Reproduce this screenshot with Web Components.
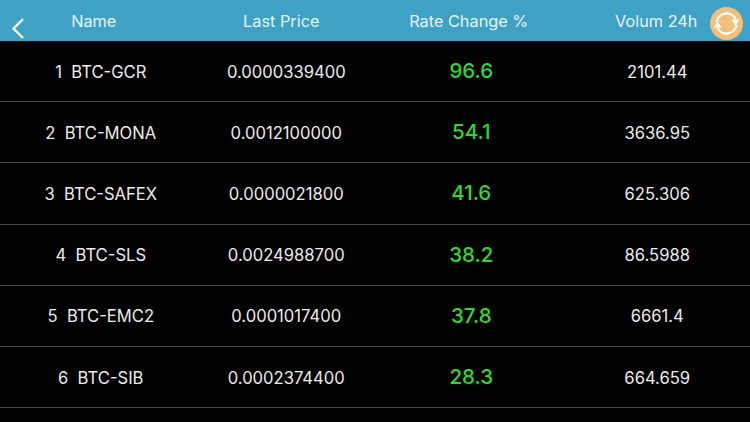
<!DOCTYPE html>
<html>
<head>
<meta charset="utf-8">
<title>Rate change</title>
<style>
  html, body { margin: 0; background: #000; }
  body { width: 750px; height: 422px; overflow: hidden; font-family: Inter, "Liberation Sans", Arial, sans-serif; }
</style>
</head>
<body>
<market-table></market-table>
<script>
const COINS = [
  ['BTC-GCR', '0.0000339400', '96.6', '2101.44'],
  ['BTC-MONA', '0.0012100000', '54.1', '3636.95'],
  ['BTC-SAFEX', '0.0000021800', '41.6', '625.306'],
  ['BTC-SLS', '0.0024988700', '38.2', '86.5988'],
  ['BTC-EMC2', '0.0001017400', '37.8', '6661.4'],
  ['BTC-SIB', '0.0002374400', '28.3', '664.659']
];

class MarketHeader extends HTMLElement {
  constructor() {
    super();
    this.attachShadow({ mode: 'open' });
  }

  connectedCallback() {
    this.shadowRoot.innerHTML = `
      <style>
        :host {
          display: grid;
          grid-template-columns: repeat(4, 1fr);
          height: 41px;
          background: #3fa1c4;
          color: #e6f6fb;
          font-size: 16.3px;
          position: relative;
        }
        span {
          text-align: center;
          line-height: 42px;
        }
        .back {
          position: absolute;
          left: 10px;
          top: 17px;
        }
        .refresh {
          position: absolute;
          left: 710px;
          top: 7px;
        }
      </style>
      <span>Name</span>
      <span>Last Price</span>
      <span>Rate Change %</span>
      <span>Volum 24h</span>
      <svg class="back" width="16" height="24" viewBox="0 0 16 24">
        <path d="M13 2.2 L3.5 11.5 L13 21" fill="none" stroke="#f4fbfd" stroke-width="2.4"/>
      </svg>
      <svg class="refresh" width="33" height="33" viewBox="0 0 33 33">
        <circle cx="16.5" cy="16.5" r="16.5" fill="#f2c078"/>
        <path d="M6.6 15 A10 10 0 0 1 25.5 12.1" fill="none" stroke="#fff" stroke-width="2.2"/>
        <path d="M26.4 18 A10 10 0 0 1 7.5 20.9" fill="none" stroke="#fff" stroke-width="2.2"/>
        <path d="M21.5 12.5 L29.5 12.5 L25.5 18.5 Z" fill="#fff"/>
        <path d="M3.5 20.5 L11.5 20.5 L7.5 14.5 Z" fill="#fff"/>
      </svg>
    `;
  }
}

class MarketRow extends HTMLElement {
  constructor() {
    super();
    this.attachShadow({ mode: 'open' });
  }

  connectedCallback() {
    this.shadowRoot.innerHTML = `
      <style>
        :host {
          display: grid;
          grid-template-columns: repeat(4, 1fr);
          align-items: center;
          box-sizing: border-box;
          height: 61.2px;
          padding-left: 8px;
          padding-top: 1px;
          border-bottom: 1px solid #47474b;
          color: #ececec;
          font-size: 16.6px;
          text-align: center;
        }
        .name { white-space: pre; }
        .rate {
          color: #2bdc2b;
          font-size: 20.5px;
          font-weight: 500;
          margin-right: 1px;
          margin-bottom: 2px;
        }
      </style>
      <span class="name">${this.getAttribute('rank')}  ${this.getAttribute('name')}</span>
      <span>${this.getAttribute('price')}</span>
      <span class="rate">${this.getAttribute('rate')}</span>
      <span>${this.getAttribute('volume')}</span>
    `;
  }
}

class MarketTable extends HTMLElement {
  constructor() {
    super();
    this.attachShadow({ mode: 'open' });
  }

  connectedCallback() {
    const rows = COINS.map((c, i) =>
      `<market-row rank="${i + 1}" name="${c[0]}" price="${c[1]}" rate="${c[2]}" volume="${c[3]}"></market-row>`
    ).join('');
    this.shadowRoot.innerHTML = `
      <style>
        :host { display: block; }
      </style>
      <market-header></market-header>
      ${rows}
    `;
  }
}

customElements.define('market-header', MarketHeader);
customElements.define('market-row', MarketRow);
customElements.define('market-table', MarketTable);
</script>
</body>
</html>
